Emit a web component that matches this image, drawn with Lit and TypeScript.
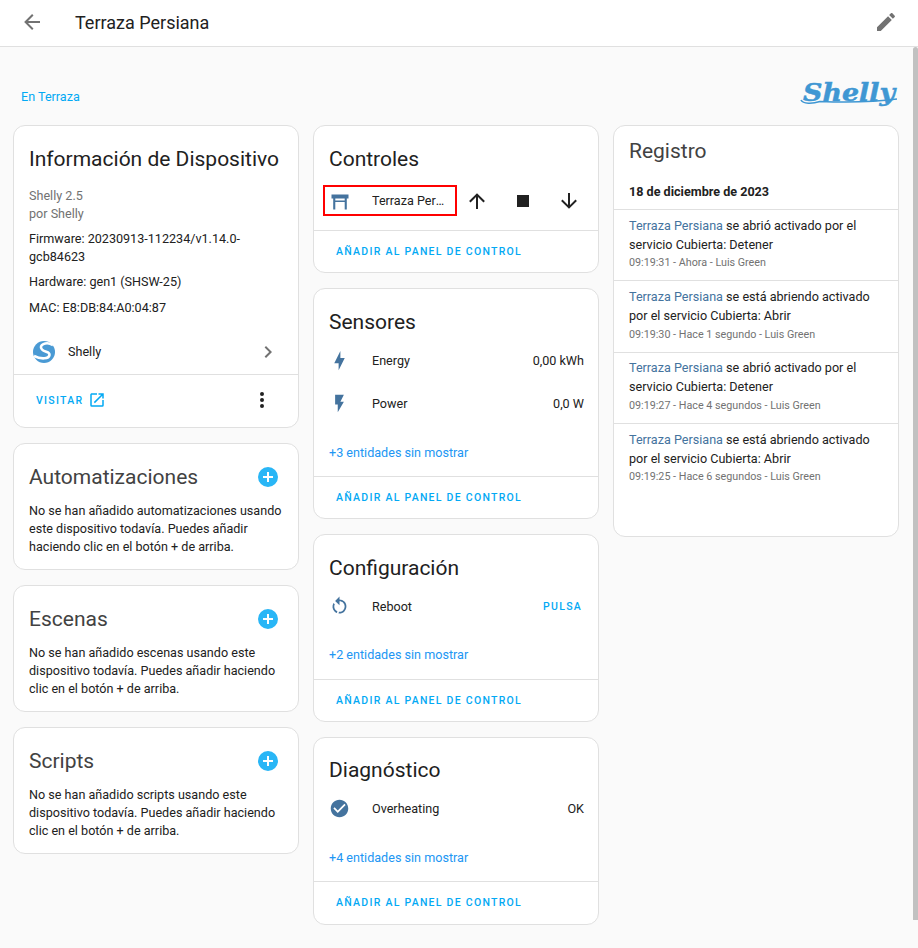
import { LitElement, html, css, svg } from 'lit';
import { customElement } from 'lit/decorators.js';

const ICONS = {
  back: 'M20,11V13H8L13.5,18.5L12.08,19.92L4.16,12L12.08,4.08L13.5,5.5L8,11H20Z',
  pencil: 'M20.71,7.04C21.1,6.65 21.1,6 20.71,5.63L18.37,3.29C18,2.9 17.35,2.9 16.96,3.29L15.12,5.12L18.87,8.87M3,17.25V21H6.75L17.81,9.93L14.06,6.18L3,17.25Z',
  pergola: 'M3.5,5.5H20.5V9.5H3.5ZM5.2,9.5H7.3V20.5H5.2ZM16.7,9.5H18.8V20.5H16.7ZM7.3,11.5H16.7V13H7.3Z',
  up: 'M13,20H11V8L5.5,13.5L4.08,12.08L12,4.16L19.92,12.08L18.5,13.5L13,8V20Z',
  stop: 'M18,18H6V6H18V18Z',
  down: 'M11,4H13V16L18.5,10.5L19.92,11.92L12,19.84L4.08,11.92L5.5,10.5L11,16V4Z',
  chevron: 'M8.59,16.58L13.17,12L8.59,7.41L10,6L16,12L10,18L8.59,16.58Z',
  open: 'M14,3V5H17.59L7.76,14.83L9.17,16.24L19,6.41V10H21V3M19,19H5V5H12V3H5C3.89,3 3,3.9 3,5V19A2,2 0 0,0 5,21H19A2,2 0 0,0 21,19V12H19V19Z',
  dots: 'M12,16A2,2 0 0,1 14,18A2,2 0 0,1 12,20A2,2 0 0,1 10,18A2,2 0 0,1 12,16M12,10A2,2 0 0,1 14,12A2,2 0 0,1 12,14A2,2 0 0,1 10,12A2,2 0 0,1 12,10M12,4A2,2 0 0,1 14,6A2,2 0 0,1 12,8A2,2 0 0,1 10,6A2,2 0 0,1 12,4Z',
  plus: 'M17,13H13V17H11V13H7V11H11V7H13V11H17M12,2A10,10 0 0,0 2,12A10,10 0 0,0 12,22A10,10 0 0,0 22,12A10,10 0 0,0 12,2Z',
  energy: 'M11 15H6L13 1V9H18L11 23V15Z',
  power: 'M7,2V13H10V22L17,10H13L17,2H7Z',
  restart: 'M12,4C14.1,4 16.1,4.8 17.6,6.3C20.7,9.4 20.7,14.5 17.6,17.6C15.8,19.5 13.3,20.2 10.9,19.9L11.4,17.9C13.1,18.1 14.9,17.5 16.2,16.2C18.5,13.9 18.5,10.1 16.2,7.7C15.1,6.6 13.5,6 12,6V10.6L7,5.6L12,0.6V4M6.3,17.6C3.7,15 3.3,11 5.1,7.9L6.6,9.4C5.5,11.6 5.9,14.4 7.8,16.2C8.3,16.7 8.9,17.1 9.6,17.4L9,19.4C8,19 7.1,18.4 6.3,17.6Z',
  check: 'M12 2C6.5 2 2 6.5 2 12S6.5 22 12 22 22 17.5 22 12 17.5 2 12 2M10 17L5 12L6.41 10.59L10 14.17L17.59 6.58L19 8L10 17Z',
};

type IconName = keyof typeof ICONS;

const icon = (name: IconName, cls = '') => html`<svg class="icon ${cls}" viewBox="0 0 24 24">${svg`<path d=${ICONS[name]}></path>`}</svg>`;

const LOG = [
  ['se abrió activado por el servicio Cubierta: Detener', '09:19:31 - Ahora - Luis Green'],
  ['se está abriendo activado por el servicio Cubierta: Abrir', '09:19:30 - Hace 1 segundo - Luis Green'],
  ['se abrió activado por el servicio Cubierta: Detener', '09:19:27 - Hace 4 segundos - Luis Green'],
  ['se está abriendo activado por el servicio Cubierta: Abrir', '09:19:25 - Hace 6 segundos - Luis Green'],
];

@customElement('app-root')
export class AppRoot extends LitElement {
  static styles = css`
    :host {
      display: block;
      position: relative;
      height: 948px;
      overflow: hidden;
      background: #fafafa;
      font-family: Roboto, sans-serif;
      font-size: 12.6px;
      color: #212121;
    }
    * {
      box-sizing: border-box;
    }
    .icon {
      display: block;
      width: 24px;
      height: 24px;
      fill: #727272;
      flex: none;
    }
    .state {
      fill: #44739e;
    }
    .dark {
      fill: #212121;
    }
    .topbar {
      height: 47px;
      display: flex;
      align-items: center;
      padding: 0 20px 2px;
      background: #fff;
      border-bottom: 1px solid #e0e0e0;
    }
    .topbar h1 {
      flex: 1;
      margin: 0 0 0 31px;
      font-size: 18px;
      font-weight: 400;
    }
    .crumbs {
      height: 78px;
      padding: 0 20px 0 21px;
      display: flex;
      align-items: flex-start;
      justify-content: space-between;
    }
    .crumbs a {
      margin-top: 42px;
      font-size: 12.6px;
      line-height: 16px;
      color: #03a9f4;
    }
    .logo {
      margin-top: 33px;
      width: 98px;
      height: 32px;
      overflow: visible;
    }
    .logo text {
      font-family: 'DejaVu Serif', serif;
      font-weight: 700;
      font-style: italic;
      font-size: 25px;
      fill: #3f97d3;
      stroke: #3f97d3;
      stroke-width: 0.5px;
    }
    .columns {
      display: grid;
      grid-template-columns: repeat(3, 286px);
      column-gap: 14px;
      padding-left: 13px;
      align-items: start;
    }
    .column {
      display: flex;
      flex-direction: column;
      gap: 15px;
    }
    .card {
      background: #fff;
      border: 1px solid #e0e0e0;
      border-radius: 12px;
    }
    .head {
      display: flex;
      align-items: center;
      justify-content: space-between;
      padding: 15px 18px 0 15px;
      height: 50px;
    }
    h2 {
      margin: 0;
      font-size: 21px;
      line-height: 32px;
      font-weight: 400;
    }
    .muted-title h2 {
      color: #424242;
    }
    .add {
      fill: #29b6f6;
    }
    .info {
      padding: 0 15px;
      line-height: 18px;
    }
    .model {
      margin-top: 11px;
      color: #727272;
    }
    .info p {
      margin: 7px 0 0;
    }
    .info p.gap {
      margin-top: 8px;
    }
    .vendor {
      display: flex;
      align-items: center;
      height: 45px;
      margin-top: 12px;
      padding: 0 18px 0 18px;
      line-height: 20px;
    }
    .vendor span {
      flex: 1;
      margin-left: 12px;
    }
    .actions {
      border-top: 1px solid #e0e0e0;
      height: 42px;
      padding: 0 22px;
      display: flex;
      align-items: center;
      font-size: 10.5px;
      font-weight: 500;
      letter-spacing: 1.27px;
      color: #03a9f4;
      text-transform: uppercase;
    }
    .visit {
      height: 53px;
      justify-content: space-between;
      padding-right: 24px;
      padding-bottom: 2px;
    }
    .visit div {
      display: flex;
      align-items: center;
      gap: 5px;
    }
    .visit .icon {
      width: 18px;
      height: 18px;
      fill: #03a9f4;
    }
    .visit .dark {
      width: 24px;
      height: 24px;
      fill: #212121;
    }
    .empty {
      margin: 0;
      padding: 7.5px 15px 13.5px;
      line-height: 18px;
    }
    .row {
      display: flex;
      align-items: center;
      height: 43px;
      padding: 0 14px 0 15px;
    }
    .row .icon {
      width: 21px;
      height: 21px;
    }
    .row .name {
      flex: 1;
      margin-left: 22px;
    }
    .press {
      font-size: 10.5px;
      font-weight: 500;
      letter-spacing: 1.27px;
      color: #03a9f4;
      padding-right: 2px;
    }
    .controls {
      display: flex;
      align-items: center;
      height: 49px;
      padding: 0 17px 0 9px;
      margin-bottom: 5px;
    }
    .entity {
      display: flex;
      align-items: center;
      flex: none;
      width: 134px;
      height: 31px;
      padding-left: 3px;
      border: 2px solid #ff0000;
    }
    .entity span {
      margin-left: 20px;
      width: 73px;
      white-space: nowrap;
      overflow: hidden;
      text-overflow: ellipsis;
    }
    .controls .btns {
      flex: 1;
      display: flex;
      justify-content: space-between;
      padding-left: 8px;
    }
    .more {
      display: block;
      margin: 17px 0 14px;
      padding: 0 15px;
      line-height: 20px;
      color: #2196f3;
    }
    .sensors .more {
      margin: 18px 0 13px;
    }
    .diag .head {
      height: 48.5px;
    }
    .diag .more {
      margin: 18.5px 0 13px;
    }
    .diag .actions {
      height: 43px;
      padding-bottom: 1px;
    }
    .log .head {
      padding-top: 0;
      height: 50px;
    }
    .date {
      padding: 8px 15px 0;
      height: 33px;
      font-weight: 700;
      line-height: 16px;
    }
    .entry {
      border-top: 1px solid #e0e0e0;
      padding: 5.5px 15px 8px;
      line-height: 19px;
      height: 71.4px;
    }
    .entry a {
      color: #44739e;
    }
    .entry small {
      display: block;
      margin-top: 0.7px;
      font-size: 10.75px;
      line-height: 17px;
      color: #727272;
    }
    .spacer {
      height: 41.4px;
    }
    .scrollbar {
      position: absolute;
      right: 0;
      top: 47px;
      width: 5px;
      height: 873px;
      background: #c1c1c1;
      border-radius: 3px 3px 0 0;
    }
  `;

  private emptyCard(title: string, text: string) {
    return html`<section class="card muted-title">
      <div class="head">
        <h2>${title}</h2>
        ${icon('plus', 'add')}
      </div>
      <p class="empty">${text}</p>
    </section>`;
  }

  private addAction() {
    return html`<div class="actions">Añadir al panel de control</div>`;
  }

  private entityCard(cls: string, title: string, iconName: IconName, name: string, value: unknown, more: string) {
    return html`<section class="card ${cls}">
      <div class="head"><h2>${title}</h2></div>
      <div class="row">
        ${icon(iconName, 'state')}
        <span class="name">${name}</span>
        ${value}
      </div>
      <a class="more">${more}</a>
      ${this.addAction()}
    </section>`;
  }

  render() {
    return html`
      <header class="topbar">
        ${icon('back')}
        <h1>Terraza Persiana</h1>
        ${icon('pencil')}
      </header>
      <div class="crumbs">
        <a>En Terraza</a>
        <svg class="logo" viewBox="0 0 98 32">
          <text x="3" y="21" textLength="92" lengthAdjust="spacingAndGlyphs">Shelly</text>
          <path d="M1 20C3 24 12 24 20 21.5C45 22.5 75 22 97 19" stroke="#3f97d3" stroke-width="1.6" fill="none"></path>
        </svg>
      </div>
      <main class="columns">
        <div class="column">
          <section class="card">
            <div class="head"><h2>Información de Dispositivo</h2></div>
            <div class="info">
              <div class="model">Shelly 2.5<br />por Shelly</div>
              <p>Firmware: 20230913-112234/v1.14.0-gcb84623</p>
              <p>Hardware: gen1 (SHSW-25)</p>
              <p class="gap">MAC: E8:DB:84:A0:04:87</p>
            </div>
            <div class="vendor">
              <svg class="icon" viewBox="0 0 24 24">
                <circle cx="12" cy="12" r="11" fill="#4a9ad4"></circle>
                <path d="M21 5C14 1 6 5 10 9.5C12.5 12.5 18 11.5 17.5 15C17 19 9 19.5 2 16" stroke="#fff" stroke-width="2.6" fill="none"></path>
              </svg>
              <span>Shelly</span>
              ${icon('chevron')}
            </div>
            <div class="actions visit">
              <div>Visitar ${icon('open')}</div>
              ${icon('dots', 'dark')}
            </div>
          </section>
          ${this.emptyCard('Automatizaciones', 'No se han añadido automatizaciones usando este dispositivo todavía. Puedes añadir haciendo clic en el botón + de arriba.')}
          ${this.emptyCard('Escenas', 'No se han añadido escenas usando este dispositivo todavía. Puedes añadir haciendo clic en el botón + de arriba.')}
          ${this.emptyCard('Scripts', 'No se han añadido scripts usando este dispositivo todavía. Puedes añadir haciendo clic en el botón + de arriba.')}
        </div>
        <div class="column">
          <section class="card">
            <div class="head"><h2>Controles</h2></div>
            <div class="controls">
              <div class="entity">
                ${icon('pergola', 'state')}
                <span>Terraza Persiana</span>
              </div>
              <div class="btns">
                ${icon('up', 'dark')} ${icon('stop', 'dark')} ${icon('down', 'dark')}
              </div>
            </div>
            ${this.addAction()}
          </section>
          <section class="card sensors">
            <div class="head"><h2>Sensores</h2></div>
            <div class="row">
              ${icon('energy', 'state')}
              <span class="name">Energy</span>
              <span>0,00 kWh</span>
            </div>
            <div class="row">
              ${icon('power', 'state')}
              <span class="name">Power</span>
              <span>0,0 W</span>
            </div>
            <a class="more">+3 entidades sin mostrar</a>
            ${this.addAction()}
          </section>
          ${this.entityCard('', 'Configuración', 'restart', 'Reboot', html`<span class="press">PULSA</span>`, '+2 entidades sin mostrar')}
          ${this.entityCard('diag', 'Diagnóstico', 'check', 'Overheating', html`<span>OK</span>`, '+4 entidades sin mostrar')}
        </div>
        <div class="column">
          <section class="card log muted-title">
            <div class="head"><h2>Registro</h2></div>
            <div class="date">18 de diciembre de 2023</div>
            ${LOG.map(
              ([text, meta]) => html`<div class="entry">
                <a>Terraza Persiana</a> ${text}
                <small>${meta}</small>
              </div>`
            )}
            <div class="spacer"></div>
          </section>
        </div>
      </main>
      <div class="scrollbar"></div>
    `;
  }
}
